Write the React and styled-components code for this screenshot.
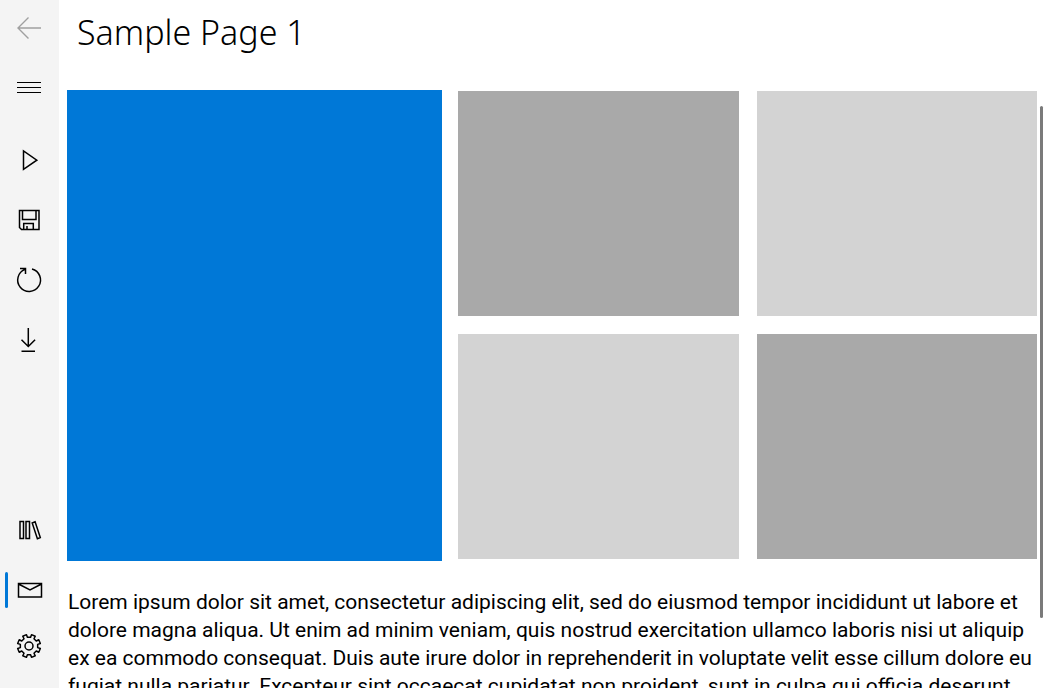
import React from "react";
import styled, { createGlobalStyle } from "styled-components";

const GlobalStyle = createGlobalStyle`
  * { box-sizing: border-box; }
  body {
    margin: 0;
    background: #fff;
    color: #000;
    font-family: Roboto, "Noto Sans", sans-serif;
  }
`;

const Shell = styled.div`
  display: flex;
  height: 100vh;
  padding: 0 8px 8px 0;
  overflow: hidden;
`;

const Sidebar = styled.nav`
  display: flex;
  flex-direction: column;
  flex: none;
  width: 59px;
  padding-bottom: 16px;
  background: #f4f4f4;
`;

const Group = styled.div`
  display: flex;
  flex-direction: column;
  margin-top: ${(p) => (p.$end ? "auto" : "0")};
  margin-bottom: ${(p) => (p.$end ? "0" : "12px")};
`;

const NavButton = styled.button`
  position: relative;
  display: flex;
  align-items: center;
  height: ${(p) => p.$height || 60}px;
  padding: 0;
  border: 0;
  background: none;
  color: ${(p) => (p.disabled ? "#a0a0a0" : "#000")};

  &[aria-current="page"]::before {
    content: "";
    position: absolute;
    left: 5px;
    top: 12px;
    width: 3px;
    height: 36px;
    border-radius: 2px;
    background: #0078d7;
  }
`;

const Glyph = styled.svg`
  display: block;
  width: 59px;
  height: 32px;
  fill: none;
  stroke: currentColor;
  stroke-width: 1.5;
`;

const Main = styled.main`
  display: flex;
  flex-direction: column;
  flex: 1;
  min-width: 0;
  padding-left: 8px;
`;

const Title = styled.h1`
  flex: none;
  margin: 0;
  padding: 8px 0 34px 10px;
  font-family: "Noto Sans", "Open Sans", sans-serif;
  font-size: 34px;
  line-height: 48px;
  font-weight: 300;
`;

const Scroller = styled.div`
  display: flex;
  flex: 1;
  min-height: 0;
  gap: 3px;
  padding-right: 5px;
`;

const Content = styled.div`
  flex: 1;
  min-width: 0;
  overflow: hidden;
`;

const Gallery = styled.div`
  display: grid;
  grid-template-columns: 375fr 579fr;
  gap: 16px;
  height: 471px;
`;

const TileGrid = styled.div`
  display: grid;
  grid-template-columns: 1fr 1fr;
  grid-template-rows: 1fr 1fr;
  gap: 18px;
  padding: 1px 0 2px;
`;

const Tile = styled.div`
  background: ${(p) => p.$color};
`;

const Body = styled.p`
  margin: 0;
  padding: 27px 0 0 1px;
  font-size: 21px;
  line-height: 28px;
`;

const ScrollThumb = styled.div`
  flex: none;
  width: 3px;
  height: 512px;
  margin-top: 16px;
  border-radius: 2px;
  background: #7a7a7a;
`;

const polar = (r, deg) => {
  const a = (deg * Math.PI) / 180;
  return `${(29 + r * Math.cos(a)).toFixed(2)} ${(16 + r * Math.sin(a)).toFixed(2)}`;
};

const gearPath =
  "M" +
  Array.from({ length: 8 }, (_, i) => {
    const c = 22.5 + i * 45;
    return [polar(8.8, c - 12), polar(11.6, c - 10), polar(11.6, c + 10), polar(8.8, c + 12)].join("L");
  }).join("L") +
  "Z";

const icons = {
  back: <path strokeWidth="1.4" d="M41 16H18M28.500 5.500 18 16l10.500 10.500" />,
  menu: <path strokeWidth="1" d="M17 11.500h24M17 16.500h24M17 21.500h24" />,
  play: <path d="M23.500 7v18.400L36.800 16.200Z" />,
  save: (
    <path d="M19.500 6.500h19.500v19H21.500l-2-2ZM22.500 6.500v9h13.500v-9M23.700 25.500v-6h9.600v6M27 22v3.500" />
  ),
  refresh: <path d="M32 5A11.400 11.400 0 1 1 25 5.400M20 4.500h5.500v5.500" />,
  download: <path d="M28.300 4v18.300M21.500 15.800l6.800 6.700 6.800-6.700M21.500 27.300h13.500" />,
  library: (
    <path d="M20 7.500h3.500v17H20ZM26 7.500h3.500v17H26ZM32.200 9l2.900-1.200 5.200 15.700-2.900 1.200Z" />
  ),
  mail: <path d="M18.500 9.500h23v13.500h-23ZM18.500 10 30 16l11.500-6" />,
  settings: (
    <>
      <path strokeLinejoin="round" d={gearPath} />
      <circle cx="29" cy="16" r="4" />
    </>
  ),
};

function NavItem({ icon, label, ...rest }) {
  return (
    <NavButton type="button" aria-label={label} {...rest}>
      <Glyph viewBox="0 0 59 32" aria-hidden="true">
        {icons[icon]}
      </Glyph>
    </NavButton>
  );
}

export default function App() {
  return (
    <Shell>
      <GlobalStyle />
      <Sidebar>
        <Group>
          <NavItem icon="back" label="Back" $height={56} disabled />
          <NavItem icon="menu" label="Menu" $height={62} />
        </Group>
        <Group>
          <NavItem icon="play" label="Play" />
          <NavItem icon="save" label="Save" />
          <NavItem icon="refresh" label="Refresh" />
          <NavItem icon="download" label="Download" />
        </Group>
        <Group $end>
          <NavItem icon="library" label="Library" />
          <NavItem icon="mail" label="Mail" aria-current="page" />
          <NavItem icon="settings" label="Settings" $height={52} />
        </Group>
      </Sidebar>
      <Main>
        <Title>Sample Page 1</Title>
        <Scroller>
          <Content>
            <Gallery>
              <Tile $color="#0078d7" />
              <TileGrid>
                <Tile $color="#a9a9a9" />
                <Tile $color="#d3d3d3" />
                <Tile $color="#d3d3d3" />
                <Tile $color="#a9a9a9" />
              </TileGrid>
            </Gallery>
            <Body>
              Lorem ipsum dolor sit amet, consectetur adipiscing elit, sed do eiusmod tempor
              incididunt ut labore et dolore magna aliqua. Ut enim ad minim veniam, quis nostrud
              exercitation ullamco laboris nisi ut aliquip ex ea commodo consequat. Duis aute irure
              dolor in reprehenderit in voluptate velit esse cillum dolore eu fugiat nulla
              pariatur. Excepteur sint occaecat cupidatat non proident, sunt in culpa qui officia
              deserunt
            </Body>
          </Content>
          <ScrollThumb />
        </Scroller>
      </Main>
    </Shell>
  );
}
